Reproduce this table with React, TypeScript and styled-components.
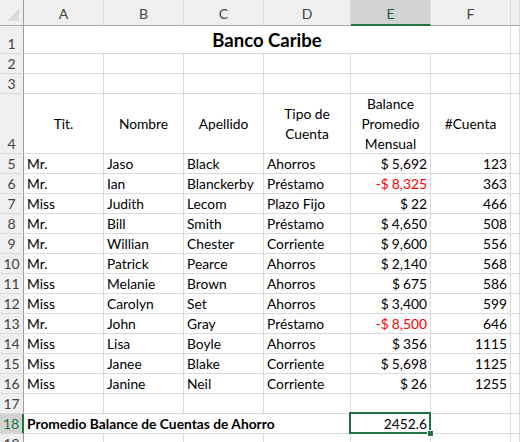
import React from "react";
import styled, { createGlobalStyle, css } from "styled-components";

const GlobalStyle = createGlobalStyle`
  html, body { margin: 0; padding: 0; background: #fff; }
  body { font-family: Lato, "Open Sans", sans-serif; overflow: hidden; }
`;

const GREEN = "#217346";
const GRID = "#d9d9d9";

const Sheet = styled.div`
  display: grid;
  grid-template-columns: 24px 80px 80px 80px 87px 80px 80px 1fr;
  grid-template-rows: 26px 28px 20px 20px 60px;
  grid-auto-rows: 20px;
  width: 520px;
  font-size: 13.8px;
  color: #000;
`;

const Corner = styled.div`
  background: #efefef;
  border-right: 1px solid #9e9e9e;
  border-bottom: 1px solid #ababab;
  box-sizing: border-box;
  position: relative;
  &::after {
    content: "";
    position: absolute;
    right: 4px;
    bottom: 4px;
    width: 0;
    height: 0;
    border-left: 12px solid transparent;
    border-bottom: 12px solid #dcdcdc;
  }
`;

const ColHead = styled.div<{ $active?: boolean }>`
  box-sizing: border-box;
  display: flex;
  align-items: center;
  justify-content: center;
  background: ${(p) => (p.$active ? "#d2d2d2" : "#efefef")};
  border-right: 1px solid #dadada;
  border-bottom: ${(p) => (p.$active ? `2px solid ${GREEN}` : "1px solid #ababab")};
  color: ${(p) => (p.$active ? "#1e5e3a" : "#444")};
  font-size: 14px;
  padding-top: ${(p) => (p.$active ? 2 : 1)}px;
`;

const RowHead = styled.div<{ $active?: boolean }>`
  box-sizing: border-box;
  display: flex;
  align-items: flex-end;
  justify-content: center;
  padding-bottom: 1px;
  background: ${(p) => (p.$active ? "#d2d2d2" : "#efefef")};
  border-bottom: 1px solid #dadada;
  border-right: ${(p) => (p.$active ? `2px solid ${GREEN}` : "1px solid #9e9e9e")};
  color: ${(p) => (p.$active ? GREEN : "#444")};
  font-size: 14px;
`;

const Cell = styled.div<{
  $align?: "left" | "right" | "center";
  $bold?: boolean;
  $red?: boolean;
  $span?: number;
  $selected?: boolean;
}>`
  box-sizing: border-box;
  border-right: 1px solid ${GRID};
  border-bottom: 1px solid ${GRID};
  display: flex;
  align-items: flex-end;
  padding: 0 3px 1px;
  white-space: nowrap;
  overflow: visible;
  justify-content: ${(p) =>
    p.$align === "right" ? "flex-end" : p.$align === "center" ? "center" : "flex-start"};
  font-weight: ${(p) => (p.$bold ? 700 : 400)};
  color: ${(p) => (p.$red ? "#ff0000" : "#000")};
  ${(p) => p.$span && css`grid-column: span ${p.$span};`}
  ${(p) =>
    p.$selected &&
    css`
      position: relative;
      &::before {
        content: "";
        position: absolute;
        left: -2px;
        top: -2px;
        right: -1px;
        bottom: -1px;
        border: 2px solid ${GREEN};
      }
      &::after {
        content: "";
        position: absolute;
        right: -4px;
        bottom: -4px;
        width: 5px;
        height: 5px;
        background: ${GREEN};
        border: 1px solid #fff;
      }
    `}
`;

const Title = styled(Cell)`
  font-size: 18.5px;
  justify-content: center;
  padding-bottom: 2px;
`;

const HeadCell = styled(Cell)`
  flex-direction: column;
  justify-content: center;
  align-items: center;
  text-align: center;
  line-height: 20px;
  padding-bottom: 0;
`;

const Money = styled.span`
  display: inline-flex;
  gap: 3px;
`;

type Row = [string, string, string, string, number, number];

const rows: Row[] = [
  ["Mr.", "Jaso", "Black", "Ahorros", 5692, 123],
  ["Mr.", "Ian", "Blanckerby", "Préstamo", -8325, 363],
  ["Miss", "Judith", "Lecom", "Plazo Fijo", 22, 466],
  ["Mr.", "Bill", "Smith", "Préstamo", 4650, 508],
  ["Mr.", "Willian", "Chester", "Corriente", 9600, 556],
  ["Mr.", "Patrick", "Pearce", "Ahorros", 2140, 568],
  ["Miss", "Melanie", "Brown", "Ahorros", 675, 586],
  ["Miss", "Carolyn", "Set", "Ahorros", 3400, 599],
  ["Mr.", "John", "Gray", "Préstamo", -8500, 646],
  ["Miss", "Lisa", "Boyle", "Ahorros", 356, 1115],
  ["Miss", "Janee", "Blake", "Corriente", 5698, 1125],
  ["Miss", "Janine", "Neil", "Corriente", 26, 1255],
];

const fmt = (n: number) => Math.abs(n).toLocaleString("en-US");

const Empty = ({ n }: { n: number }) => (
  <>
    {Array.from({ length: n }).map((_, i) => (
      <Cell key={i} />
    ))}
  </>
);

export default function App() {
  const cols = ["A", "B", "C", "D", "E", "F", ""];
  return (
    <>
      <GlobalStyle />
      <Sheet>
        <Corner />
        {cols.map((c) => (
          <ColHead key={c || "g"} $active={c === "E"}>{c}</ColHead>
        ))}

        <RowHead>1</RowHead>
        <Title $span={6} $bold>Banco Caribe</Title>
        <Cell />

        <RowHead>2</RowHead>
        <Empty n={7} />
        <RowHead>3</RowHead>
        <Empty n={7} />

        <RowHead>4</RowHead>
        <HeadCell>Tit.</HeadCell>
        <HeadCell>Nombre</HeadCell>
        <HeadCell>Apellido</HeadCell>
        <HeadCell><span>Tipo de</span><span>Cuenta</span></HeadCell>
        <HeadCell><span>Balance</span><span>Promedio</span><span>Mensual</span></HeadCell>
        <HeadCell>#Cuenta</HeadCell>
        <Cell />

        {rows.map((r, i) => (
          <React.Fragment key={i}>
            <RowHead>{i + 5}</RowHead>
            <Cell>{r[0]}</Cell>
            <Cell>{r[1]}</Cell>
            <Cell>{r[2]}</Cell>
            <Cell>{r[3]}</Cell>
            <Cell $align="right" $red={r[4] < 0}>
              <Money>
                <span>{r[4] < 0 ? "-$" : "$"}</span>
                <span>{fmt(r[4])}</span>
              </Money>
            </Cell>
            <Cell $align="right">{r[5]}</Cell>
            <Cell />
          </React.Fragment>
        ))}

        <RowHead>17</RowHead>
        <Empty n={7} />

        <RowHead $active>18</RowHead>
        <Cell $span={4} $bold>Promedio Balance de Cuentas de Ahorro</Cell>
        <Cell $align="right" $selected>2452.6</Cell>
        <Empty n={2} />

        <RowHead>19</RowHead>
        <Empty n={7} />
      </Sheet>
    </>
  );
}
